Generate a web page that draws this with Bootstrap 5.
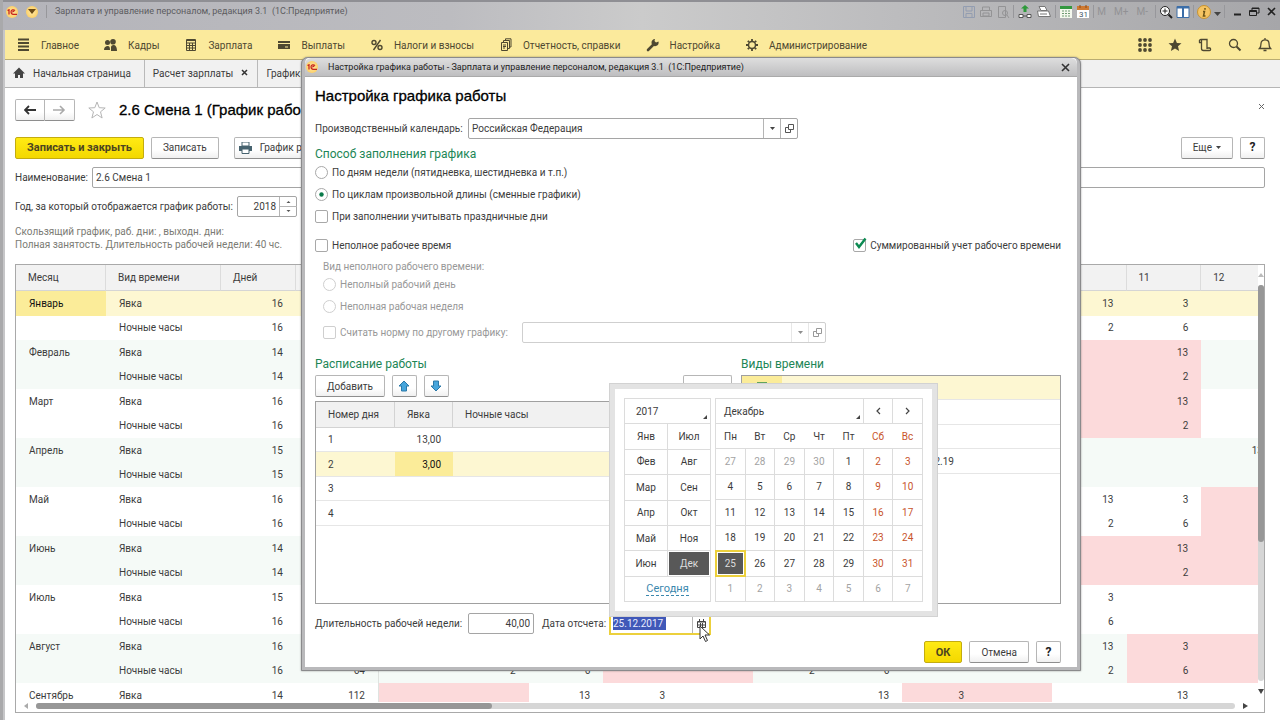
<!DOCTYPE html>
<html lang="ru">
<head>
<meta charset="utf-8">
<meta name="viewport" content="width=device-width, initial-scale=1">
<title>Настройка графика работы</title>
<link href="https://cdn.jsdelivr.net/npm/bootstrap@5.3.0/dist/css/bootstrap.min.css" rel="stylesheet">
<style>
  body { font-family: Roboto, "Liberation Sans", sans-serif; font-size: 10px; line-height: 13px; color: #3c3c3c; background: #fff; }
  button, input { font: inherit; color: inherit; }
  svg { display: block; flex: none; }
  .app-window { height: 100vh; overflow: hidden; border-left: 3px solid #a9a9ab; box-shadow: inset 2px 0 #c6c6c8; }
  .plain { border: 0; background: none; padding: 0; }

  /* title bar */
  .titlebar { height: 30px; padding: 0 4px 8px 3px; border-top: 2px solid #8f8f94; background: linear-gradient(90deg, #b4b4ba, #bcbcc0 35%, #cbcbcb 50%, #bcbcbe 70%, #a6a6a9); color: #5c5c60; }
  .tools { gap: 3px; }
  .win-name { font-size: 9px; white-space: nowrap; }
  .vsep { width: 1px; height: 13px; background: #97979b; }
  .orb { width: 12px; height: 12px; border-radius: 50%; background: radial-gradient(#ffe9a8, #fbc64e); display: flex; align-items: center; justify-content: center; flex: none; }
  .faint { opacity: .35; }

  /* sections */
  .sections { height: 30px; margin-left: 2px; padding: 2px 8px 0 11px; background: #fbea9c; border-bottom: 1px solid #b9ac72; color: #4e4831; }
  .sections a { color: inherit; text-decoration: none; gap: 9px; }
  .sections nav { gap: 24px; }
  .tabs { height: 28px; margin-left: 2px; background: #f1f1f1; border-bottom: 1px solid #b5b5b5; }
  .tabs a { color: #3c3c3c; text-decoration: none; border-right: 1px solid #b9b9b9; padding: 0 8px; }

  .page { padding: 11px 15px 7px 12px; }
  .caption { font: 15px/20px "Liberation Sans", sans-serif; color: #000; -webkit-text-stroke: .3px #000; margin: 0; white-space: nowrap; }
  .cmd { height: 22px; padding: 0 11px; border: 1px solid #b6b6b6; border-bottom-color: #8e8e8e; border-radius: 2px; background: linear-gradient(#fff 60%, #f0f0f0); white-space: nowrap; display: flex; align-items: center; justify-content: center; }
  .cmd-main { background: linear-gradient(#ffea14, #f3d800); border-color: #c3ac10; font-size: 11px; font-weight: 700; color: #4b4420; }
  .cmd-help { width: 25px; padding: 0; font-weight: 700; font-size: 12px; color: #222; }
  .cmds { gap: 7px; }
  .field { height: 21px; border: 1px solid #a5a5a5; border-radius: 2px; background: #fff; display: flex; min-width: 0; }
  .field input { border: 0; outline: 0; background: none; min-width: 0; width: 100%; padding: 0 3px; }
  .field button { flex: none; width: 17px; border: 0; border-left: 1px solid #b5b5b5; background: none; padding: 0; display: flex; align-items: center; justify-content: center; }
  .field.off { border-color: #cfcfcf; }
  .field.off button { border-color: #d8d8d8; opacity: .6; }
  .muted { color: #7b7b74; }

  /* schedule grid */
  .sheet { border: 1px solid #a9a9a9; margin-top: 13px; }
  .sheet-scroll { overflow: hidden; }
  .sheet table { width: calc(100% + 18px); table-layout: fixed; border-collapse: separate; border-spacing: 0; }
  .sheet th { height: 26px; background: #f2f2f2; font-weight: 400; padding: 0 12px; border-right: 1px solid #dcdcdc; border-bottom: 1px solid #d5d5d5; }
  .sheet td { height: 24px; padding: 0 13px; text-align: right; white-space: nowrap; }
  .sheet tr:nth-child(odd) td { height: 25px; }
  .sheet td:nth-child(-n+2) { text-align: left; }
  .sheet td:nth-child(4) { border-right: 1px solid #dfe3e0; }
  .sheet .band td { background: #f5faf7; }
  .sheet .current td { background: #fdf7d2; }
  .sheet .current td:first-child { background: #fbec99; color: #111; }
  .sheet td.rest { background: #fcdadb; }
  .bar-y { width: 14px; }
  .bar-x { padding: 1px 8px 3px; }
  .track { background: #d6d6d6; border-radius: 4px; }
  .thumb { background: #979797; border-radius: 4px; }

  /* dialog */
  .dlg { position: absolute; left: 298px; right: 199px; top: 57px; border: solid #b9b9bb; border-width: 1px 4px 4px; border-radius: 7px 7px 0 0; outline: 1px solid #8a8a8c; outline-offset: -1px; background: #fff; box-shadow: 0 0 2px rgba(0,0,0,.4); }
  .dlg-title { height: 19px; background: linear-gradient(#dedede, #bebec0); border-radius: 6px 6px 0 0; color: #222; padding: 0 3px 0 1px; border-bottom: 1px solid #aaa; }
  .dlg-title .win-name { margin-left: 10px; }
  .dlg-body { padding: 9px 16px 4px 10px; }
  .dlg-body > * { flex: none; }
  .dlg-body label { white-space: nowrap; }
  .dlg-foot { margin-top: 6px; }
  .group { color: #1d8656; font-size: 12px; line-height: 14px; margin: 0; font-weight: 400; }
  .opt { height: 22px; display: flex; align-items: center; gap: 4px; }
  .opt .form-check-input { width: 13px; height: 13px; margin: 0; border-color: #a8a8a8; flex: none; border-radius: 2px; box-shadow: none; }
  .opt .form-check-input[type=radio] { border-radius: 50%; }
  .opt .form-check-input:checked { background-color: #fff; }
  .opt .form-check-input:checked[type=radio] { --bs-form-check-bg-image: url("data:image/svg+xml,%3csvg xmlns='http://www.w3.org/2000/svg' viewBox='-4 -4 8 8'%3e%3ccircle r='1.6' fill='%230a7a4a'/%3e%3c/svg%3e"); }
  .opt .form-check-input:disabled, .opt .form-check-input:disabled ~ label { opacity: 1; }
  .opt .form-check-input:disabled { border-color: #cfcfcf; }
  .off-text { color: #989898; }
  .lists { display: grid; grid-template-columns: 417fr 320fr; column-gap: 9px; margin-top: 14px; }
  .lists > div { margin-top: 4px; }
  .box { border: 1px solid #a0a0a0; }
  .box table { width: 100%; table-layout: fixed; border-collapse: separate; border-spacing: 0; }
  .box th { height: 26px; font-weight: 400; background: #f1f1f1; padding: 0 12px; border-bottom: 1px solid #d3d3d3; border-right: 1px solid #d3d3d3; }
  .box td { height: 24px; padding: 0 12px; border-bottom: 1px solid #e6e6e6; }
  .box tr:nth-child(even) td { height: 25px; }
  .box .picked td { background: #fdf7d2; }
  .box td.cell { background: #fbec99; color: #111; }

  /* calendar */
  .date { width: 102px; border: 2px solid #ecd03c; border-radius: 0; height: 23px; }
  .date .sel { background: #4058b8; color: #e8ecff; flex: none; width: 53px; height: 13px; margin: 3px 0 0 2px; padding: 0; }
  .cal { position: absolute; left: 0; bottom: 18px; width: 329px; border: 6px solid #e3e3e3; outline: 1px solid #d2d2d2; outline-offset: -1px; background: #fff; padding: 9px; display: grid; grid-template-columns: 87px 1fr; column-gap: 4px; z-index: 2; }
  .months { display: grid; grid-template: repeat(8, 1fr) / 1fr 1fr; gap: 1px; background: #dcdcdc; border: 1px solid #dcdcdc; height: 204px; }
  .months > * { border: 0; background: #fff; padding: 0; display: flex; align-items: center; justify-content: center; }
  .months .wide { grid-column: span 2; }
  .pick { position: relative; }
  .months .pick { padding-left: 11px; justify-content: flex-start; }
  .days .pick { padding-left: 8px; text-align: left; }
  .pick::after { content: ""; position: absolute; right: 3px; bottom: 4px; border: 2px solid; border-color: transparent #444 #444 transparent; }
  .months .on { background: #585858; color: #ddd; outline: 1px solid #fff; outline-offset: -1px; }
  .days { width: 100%; height: 204px; table-layout: fixed; border-collapse: collapse; text-align: center; border: 1px solid #dcdcdc; }
  .days td, .days th { height: 25px; padding: 0; font-weight: 400; border: 1px solid #dcdcdc; }
  .days tr.wd th { border-width: 1px 0; }
  .days .plain svg { margin: auto; }
  .days td:nth-child(n+6), .days .wd th:nth-child(n+6) { color: #c8552c; }
  .days td.out { color: #a3a3a3 !important; }
  .days td.on { background: #585858; color: #ddd; outline: 2px solid #ecd03c; outline-offset: -1px; box-shadow: inset 0 0 0 2px #fff; }
  .today { color: #3a87ad; text-decoration: none; border-bottom: 1px dashed #3a87ad; font-size: 11px; }
  .pointer { position: absolute; left: 90px; top: 13px; z-index: 3; }
</style>
</head>
<body>
<div class="app-window d-flex flex-column position-relative">

  <header class="titlebar d-flex align-items-center justify-content-between">
    <div class="d-flex align-items-center gap-2">
      <span class="orb"><svg width="10" height="6" viewBox="0 0 10 6" fill="none" stroke="#c8281e" stroke-width="1.3"><path d="M0.5 1.5L2 .8V5.5M8 1.6C6.5 0 4 1 4 3c0 2 1.500 2.400 2.500 2.400H10M7.300 2.600c-.8-.6-1.800 0-1.600.8"/></svg></span>
      <span class="orb"><svg width="8" height="5"><path d="M0 0h8L4 5z" fill="#6b4a16"/></svg></span>
      <span class="vsep"></span>
      <span class="win-name">Зарплата и управление персоналом, редакция 3.1&nbsp; (1С:Предприятие)</span>
    </div>
    <div class="tools d-flex align-items-center">
      <svg class="faint" width="14" height="14" fill="none" stroke="#4f6da0"><path d="M1.500 1.500h11v11h-11zM4 2v4h6V2M4 12V8.500h6V12"/></svg>
      <svg class="faint" width="14" height="14" fill="none" stroke="#555"><path d="M3.500 5V2h7v3M1.500 5.500h11v6h-11zM4 8h6v3H4z"/></svg>
      <svg class="faint" width="14" height="14" fill="none" stroke="#555"><path d="M2.500 1.500h7v11h-7z"/><circle cx="9" cy="8" r="2.500"/><path d="M11 10l2 3"/></svg>
      <span class="vsep"></span>
      <svg width="16" height="14" fill="none" stroke="#555"><path d="M2 9.500h4v3H2zM10 9.500h4v3h-4zM6 11h4" fill="#fff"/><path d="M8 0l4 3.500H9.500V7h-3V3.500H4z" fill="#2e9a3a" stroke="none"/></svg>
      <svg width="16" height="14" fill="#fff" stroke="#777"><path d="M3 1.500h6l2 4H5zM1.500 6h11l2 5.500h-12zM4 9h7" /></svg>
      <span class="vsep"></span>
      <svg width="14" height="14"><path d="M1 1h12v12H1z" fill="#f4f8ee"/><path d="M1 1h12v3H1z" fill="#34983f"/><path d="M3 6h2M6 6h2M9 6h2M3 8.500h2M6 8.500h2M9 8.500h2M3 11h2M6 11h2M9 11h2" stroke="#6f9a73"/></svg>
      <svg width="14" height="14"><path d="M1 2h12v11H1z" fill="#fff"/><path d="M1 1h12v4H1z" fill="#cf7a32"/><path d="M4 0v3M10 0v3" stroke="#8a4a1a"/><text x="3" y="12" font-size="8" fill="#456">31</text></svg>
      <span class="vsep"></span>
      <span class="faint d-flex gap-2"><span>M</span><span>M+</span><span>M-</span></span>
      <span class="vsep ms-1"></span>
      <svg width="14" height="14" fill="none" stroke="#222"><circle cx="6" cy="6" r="4.500" fill="#fff"/><path d="M3.500 6h5M6 3.500v5"/><path d="M9.500 9.500l3.500 3.500" stroke-width="2"/></svg>
      <svg width="14" height="14"><path d="M1 1.500h12v11H1z" fill="#fff" stroke="#3c6ea8"/><path d="M1 2.500h12M7 2v11" stroke="#3c6ea8" stroke-width="2"/></svg>
      <span class="vsep"></span>
      <svg width="14" height="14"><circle cx="7" cy="7" r="6.500" fill="#f5c462" stroke="#c79332"/><path d="M8 3v1.800M6 6.500h1.500L6.500 11H8.500" stroke="#6b5418" stroke-width="1.500" fill="none"/></svg>
      <svg width="7" height="4" class="mt-1"><path d="M0 0h7L3.500 4z" fill="#444"/></svg>
      <span class="vsep me-1"></span>
      <button class="plain" aria-label="Свернуть"><svg width="10" height="10"><path d="M2 7.500h7" stroke="#222" stroke-width="2"/></svg></button>
      <button class="plain mx-1" aria-label="Восстановить"><svg width="11" height="10" fill="none" stroke="#222"><path d="M3 3V1h7v5H8M3 1.500h7M.5 3.500h7v5h-7zM1 4.500h6"/></svg></button>
      <button class="plain" aria-label="Закрыть"><svg width="9" height="9"><path d="M1 1l7 7M8 1l-7 7" stroke="#222" stroke-width="1.600"/></svg></button>
    </div>
  </header>

  <div class="sections d-flex align-items-center justify-content-between flex-shrink-0">
    <nav class="d-flex align-items-center">
      <a href="#" class="d-flex align-items-center"><svg width="16" height="14"><path d="M2 1.500h11M2 5h11M2 8.500h11M2 12h11" stroke="#4e4831" stroke-width="1.800"/></svg>Главное</a>
      <a href="#" class="d-flex align-items-center"><svg width="16" height="14" fill="#4e4831"><circle cx="10" cy="3.800" r="2.800"/><circle cx="4.500" cy="4.500" r="2.500"/><path d="M1 12c0-3 2-4 3.500-4S7 8.500 7 12zM8 10c-.3-2 1-3 2.500-3S14 8 14 13H8z"/></svg>Кадры</a>
      <a href="#" class="d-flex align-items-center"><svg width="16" height="14" fill="none" stroke="#4e4831"><path d="M3.500 1.500h9v11h-9zM3.500 2.500h9M3.500 5h9M3.500 7.500h9M3.500 10h9M6.500 5v7M9.500 5v7"/></svg>Зарплата</a>
      <a href="#" class="d-flex align-items-center"><svg width="16" height="14" fill="#4e4831"><path d="M2 3h12v2H2zM2 6h12v5H2z"/><path d="M9 9h3" stroke="#fbea9c"/></svg>Выплаты</a>
      <a href="#" class="d-flex align-items-center"><svg width="16" height="14" fill="none" stroke="#4e4831" stroke-width="1.400"><circle cx="5" cy="4.500" r="2"/><circle cx="11" cy="9.500" r="2"/><path d="M11.500 2l-7 10"/></svg>Налоги и взносы</a>
      <a href="#" class="d-flex align-items-center"><svg width="16" height="14" fill="none" stroke="#4e4831"><path d="M3.500 4.500h6v8h-6zM5.500 4V2.500h6v8H10M7.500 2V.8H13V9h-1M5 7h3M5 8.500h3M5 10h2"/></svg>Отчетность, справки</a>
      <a href="#" class="d-flex align-items-center"><svg width="16" height="14"><path d="M3 12l6-6" stroke="#4e4831" stroke-width="2.600" stroke-linecap="round"/><path d="M13.500 3.500A3.600 3.600 0 1 1 10 1L9.500 3l1.500 1.500z" fill="#4e4831"/></svg>Настройка</a>
      <a href="#" class="d-flex align-items-center"><svg width="16" height="14" fill="none" stroke="#4e4831"><circle cx="8" cy="7" r="3.500" stroke-width="1.500"/><path d="M8 1v2M8 11v2M2 7h2M12 7h2M3.800 2.800l1.400 1.400M10.800 9.800l1.400 1.400M3.800 11.200l1.400-1.400M10.800 4.200l1.400-1.400" stroke-width="1.800"/></svg>Администрирование</a>
    </nav>
    <div class="d-flex gap-3">
      <svg width="14" height="14" fill="#4e4831"><g id="r"><circle cx="2" cy="2" r="1.900"/><circle cx="7" cy="2" r="1.900"/><circle cx="12" cy="2" r="1.900"/></g><use href="#r" y="5"/><use href="#r" y="10"/></svg>
      <svg width="14" height="14"><path d="M7 .5l1.900 4.400 4.600.4-3.500 3 1.100 4.700L7 10.500 2.900 13 4 8.300.5 5.300l4.600-.4z" fill="#4e4831"/></svg>
      <svg width="14" height="14" fill="none" stroke="#4e4831" stroke-width="1.300"><path d="M3.500 4.500h-2c-.8-3.500 2-3 2-3h5.500v9.500M3.500 2v8.500c0 1.500 1 2 2 2h6c1.500 0 1.500-2.500 0-2.500M9 10h3"/></svg>
      <svg width="14" height="14" fill="none" stroke="#4e4831"><circle cx="5.500" cy="5.500" r="4" stroke-width="1.300"/><path d="M8.500 8.500l4 4" stroke-width="2"/></svg>
      <svg width="14" height="14" fill="none" stroke="#4e4831" stroke-width="1.300"><path d="M1.500 10.500C3 9 3 7.500 3 5.500 3 3 5 1.800 7 1.800S11 3 11 5.500c0 2 0 3.500 1.500 5zM7 0v2M5.500 12.500h3M1.500 10.500h11"/></svg>
    </div>
  </div>

  <div class="tabs d-flex flex-shrink-0">
    <a href="#" class="d-flex align-items-center gap-2" style="padding-right:13px"><svg width="12" height="12"><path d="M6 .5L0 6.500h2V11h3V8h2v3h3V6.500h2z" fill="#444"/></svg>Начальная страница</a>
    <a href="#" class="d-flex align-items-center">Расчет зарплаты<svg class="ms-2" width="8" height="8"><path d="M1 1l5 5M6 1L1 6" stroke="#333" stroke-width="1.500"/></svg></a>
    <a href="#" class="d-flex align-items-center border-0">Графики</a>
  </div>

  <main class="page d-flex flex-column flex-grow-1" style="min-height:0">
    <div class="d-flex align-items-center">
      <div class="btn-group">
        <button class="cmd px-2 rounded-end-0" aria-label="Назад"><svg width="12" height="10"><path d="M5 1L1 5l4 4M1 5h11" stroke="#333" stroke-width="1.800" fill="none"/></svg></button>
        <button class="cmd px-2 rounded-start-0 border-start-0" aria-label="Вперед"><svg width="13" height="10"><path d="M7 1l4 4-4 4M11 5H0" stroke="#aaa" stroke-width="1.600" fill="none"/></svg></button>
      </div>
      <svg style="margin:0 13px" width="18" height="18" viewBox="0 0 18 18"><path d="M9 1l2.200 5.700 6 .3-4.700 3.800L14.100 17 9 13.500 3.900 17l1.600-6.200L.8 7l6-.3z" fill="#fff" stroke="#b5b5b5"/></svg>
      <h1 class="caption flex-grow-1">2.6 Смена 1 (График рабо</h1>
      <button class="plain align-self-start" aria-label="Закрыть форму"><svg width="7" height="16"><path d="M1 5l5 5M6 5l-5 5" stroke="#666"/></svg></button>
    </div>
    <div class="cmds d-flex align-items-center mt-3">
      <button class="cmd cmd-main">Записать и закрыть</button>
      <button class="cmd">Записать</button>
      <button class="cmd ms-2 px-1 gap-2"><svg width="13" height="12"><path d="M3 0h7v4H3z" fill="#fff" stroke="#47636f"/><path d="M0 4h13v5H0z" fill="#47636f"/><path d="M3 7h7v4.500H3z" fill="#fff" stroke="#47636f"/></svg>График р</button>
      <button class="cmd ms-auto gap-1">Еще <svg width="5" height="3"><path d="M0 0h5L2.500 3z" fill="#444"/></svg></button>
      <button class="cmd cmd-help">?</button>
    </div>
    <div class="d-flex align-items-center mt-2 gap-1">
      <label for="nm" class="text-nowrap">Наименование:</label>
      <div class="field w-100"><input id="nm" value="2.6 Смена 1"></div>
    </div>
    <div class="d-flex align-items-center mt-2 gap-1">
      <label for="yr" class="text-nowrap">Год, за который отображается график работы:</label>
      <div class="field" style="width:60px"><input id="yr" class="text-end" value="2018">
        <button aria-label="Изменить год"><svg width="17" height="19"><path d="M0 9.500h17" stroke="#b5b5b5"/><path d="M8.500 4l2 2h-4zM8.500 15l2-2h-4z" fill="#555"/></svg></button></div>
    </div>
    <p class="muted mt-2 mb-0">Скользящий график, раб. дни: , выходн. дни:<br>Полная занятость. Длительность рабочей недели: 40 чс.</p>
    <div class="sheet d-flex flex-column flex-grow-1" style="min-height:0">
      <div class="d-flex flex-grow-1" style="min-height:0">
        <div class="sheet-scroll flex-grow-1">
          <table>
            <colgroup><col style="width:90px"><col style="width:115px"><col style="width:75px"><col style="width:83px"></colgroup>
            <thead><tr id="head"><th>Месяц</th><th>Вид времени</th><th>Дней</th><th></th></tr></thead>
            <tbody id="rows"></tbody>
          </table>
        </div>
        <div class="bar-y d-flex flex-column align-items-center pt-1">
          <svg width="6" height="4" class="mt-1"><path d="M0 4h6L3 0z" fill="#bbb"/></svg>
          <div class="track flex-grow-1 mt-2" style="width:6px"><div class="thumb" style="height:65%"></div></div>
          <svg width="6" height="5" class="my-2"><path d="M0 0h6L3 5z" fill="#444"/></svg>
        </div>
      </div>
      <div class="bar-x d-flex align-items-center gap-2">
        <svg width="4" height="6"><path d="M4 0v6L0 3z" fill="#aaa"/></svg>
        <div class="track flex-grow-1"><div class="thumb" style="width:38%;height:6px"></div></div>
        <svg width="5" height="6" class="me-2"><path d="M0 0v6l5-3z" fill="#444"/></svg>
      </div>
    </div>
  </main>

  <section class="dlg" role="dialog" aria-label="Настройка графика работы">
    <div class="dlg-title d-flex align-items-center">
      <span class="orb"><svg width="10" height="6" viewBox="0 0 10 6" fill="none" stroke="#c8281e" stroke-width="1.300"><path d="M0.5 1.500L2 .8V5.500M8 1.600C6.500 0 4 1 4 3c0 2 1.500 2.400 2.500 2.400H10M7.300 2.600c-.8-.6-1.800 0-1.600.8"/></svg></span>
      <span class="win-name flex-grow-1">Настройка графика работы - Зарплата и управление персоналом, редакция 3.1&nbsp; (1С:Предприятие)</span>
      <button class="plain me-1" aria-label="Закрыть окно"><svg width="9" height="9"><path d="M1 1l7 7M8 1L1 8" stroke="#333" stroke-width="1.600"/></svg></button>
    </div>
    <div class="dlg-body d-flex flex-column">
      <h2 class="caption">Настройка графика работы</h2>
      <div class="d-flex align-items-center" style="margin-top:12px">
        <label for="pc" style="width:153px">Производственный календарь:</label>
        <div class="field" style="width:330px"><input id="pc" value="Российская Федерация">
          <button aria-label="Выбрать"><svg width="5" height="3"><path d="M0 0h5L2.500 3z" fill="#444"/></svg></button>
          <button aria-label="Открыть"><svg width="9" height="9" fill="none" stroke="#555"><path d="M3.500 .5h5v5h-5zM3 3.500H.5v5h5V6"/></svg></button></div>
      </div>
      <h3 class="group mt-2">Способ заполнения графика</h3>
      <div class="opt"><input class="form-check-input" type="radio" name="fill" id="f1"><label for="f1">По дням недели (пятидневка, шестидневка и т.п.)</label></div>
      <div class="opt"><input class="form-check-input" type="radio" name="fill" id="f2" checked><label for="f2">По циклам произвольной длины (сменные графики)</label></div>
      <div class="opt"><input class="form-check-input" type="checkbox" id="f3"><label for="f3">При заполнении учитывать праздничные дни</label></div>
      <div class="d-flex justify-content-between" style="margin-top:7px">
        <div class="opt"><input class="form-check-input" type="checkbox" id="f4"><label for="f4">Неполное рабочее время</label></div>
        <div class="opt position-relative"><input class="form-check-input" type="checkbox" id="f5" checked style="--bs-form-check-bg-image:none"><label for="f5">Суммированный учет рабочего времени</label>
          <svg class="position-absolute start-0 top-0" style="pointer-events:none" width="15" height="18"><path d="M3 9l3 4L12.500 4.500" fill="none" stroke="#0c8a52" stroke-width="2.400"/></svg></div>
      </div>
      <div class="off-text ps-2">
        <div class="mt-1">Вид неполного рабочего времени:</div>
        <div class="opt"><input class="form-check-input" type="radio" name="part" id="p1" disabled><label for="p1">Неполный рабочий день</label></div>
        <div class="opt"><input class="form-check-input" type="radio" name="part" id="p2" disabled><label for="p2">Неполная рабочая неделя</label></div>
        <div class="d-flex align-items-center mt-1">
          <div class="opt" style="width:199px"><input class="form-check-input" type="checkbox" id="p3" disabled><label for="p3">Считать норму по другому графику:</label></div>
          <div class="field off" style="width:304px"><input aria-label="Другой график" disabled>
            <button aria-label="Выбрать график"><svg width="5" height="3"><path d="M0 0h5L2.500 3z" fill="#444"/></svg></button>
            <button aria-label="Открыть график"><svg width="9" height="9" fill="none" stroke="#555"><path d="M3.500 .5h5v5h-5zM3 3.500H.5v5h5V6"/></svg></button></div>
        </div>
      </div>
      <div class="lists">
        <h3 class="group">Расписание работы</h3>
        <h3 class="group">Виды времени</h3>
        <div>
          <div class="cmds d-flex">
            <button class="cmd">Добавить</button>
            <button class="cmd cmd-help" aria-label="Вверх"><svg width="12" height="12"><path d="M6 1l5 5H8.500v5h-5V6H1z" fill="#46a5dc" stroke="#2b78a8"/></svg></button>
            <button class="cmd cmd-help" aria-label="Вниз"><svg width="12" height="12"><path d="M6 11l5-5H8.500V1h-5v5H1z" fill="#46a5dc" stroke="#2b78a8"/></svg></button>
            <button class="cmd ms-auto" style="width:49px" aria-label="Еще"></button>
          </div>
          <div class="box mt-1" style="height:203px">
            <table>
              <colgroup><col style="width:79px"><col style="width:58px"><col></colgroup>
              <thead><tr><th>Номер дня</th><th>Явка</th><th>Ночные часы</th></tr></thead>
              <tbody>
                <tr><td>1</td><td class="text-end">13,00</td><td></td></tr>
                <tr class="picked"><td>2</td><td class="cell text-end">3,00</td><td></td></tr>
                <tr><td>3</td><td></td><td></td></tr>
                <tr><td>4</td><td></td><td></td></tr>
              </tbody>
            </table>
          </div>
        </div>
        <div class="box">
          <table>
            <colgroup><col style="width:40px"><col></colgroup>
            <tbody>
              <tr class="picked"><td class="cell"><svg width="16" height="18"><path d="M3 4h10M5 9l3 3 5-8" stroke="#2f8a4a" stroke-width="1.500" fill="none"/></svg></td><td></td></tr>
              <tr><td></td><td></td></tr>
              <tr><td></td><td></td></tr>
              <tr><td></td><td class="text-end" style="padding-right:106px">25.12.19</td></tr>
            </tbody>
          </table>
        </div>
      </div>
      <div class="d-flex align-items-center mt-2">
        <label for="wk" style="width:153px">Длительность рабочей недели:</label>
        <div class="field" style="width:66px"><input id="wk" class="text-end" value="40,00"></div>
        <label for="dt" class="ms-2" style="width:67px">Дата отсчета:</label>
        <div class="position-relative">
          <div class="field date"><input id="dt" class="sel" value="25.12.2017">
            <button class="ms-auto" aria-label="Календарь"><svg width="9" height="9"><path d="M.5 2.500h8v6h-8zM2.500 0v2M6.500 0v2M1 3h7M3.500 4v4M5.500 4v4M1 6h7" stroke="#444" fill="none"/></svg></button></div>
          <div class="cal">
            <div class="months">
              <button class="pick wide">2017</button>
              <button>Янв</button><button>Июл</button><button>Фев</button><button>Авг</button><button>Мар</button><button>Сен</button>
              <button>Апр</button><button>Окт</button><button>Май</button><button>Ноя</button><button>Июн</button><button class="on">Дек</button>
              <div class="wide"><a href="#" class="today">Сегодня</a></div>
            </div>
            <table class="days">
              <thead>
                <tr><th colspan="5" class="pick">Декабрь</th><th><button class="plain" aria-label="Предыдущий месяц"><svg width="5" height="8"><path d="M4 1L1 4l3 3" fill="none" stroke="#444" stroke-width="1.200"/></svg></button></th><th><button class="plain" aria-label="Следующий месяц"><svg width="5" height="8"><path d="M1 1l3 3-3 3" fill="none" stroke="#444" stroke-width="1.200"/></svg></button></th></tr>
                <tr class="wd"><th>Пн</th><th>Вт</th><th>Ср</th><th>Чт</th><th>Пт</th><th>Сб</th><th>Вс</th></tr>
              </thead>
              <tbody id="days"></tbody>
            </table>
          </div>
          <svg class="pointer" width="12" height="18"><path d="M1 1v13l3-3 2.500 5.500 2-1L6 10h4.500z" fill="#fff" stroke="#333"/></svg>
        </div>
      </div>
      <div class="cmds dlg-foot d-flex justify-content-end">
        <button class="cmd cmd-main">ОК</button>
        <button class="cmd">Отмена</button>
        <button class="cmd cmd-help">?</button>
      </div>
    </div>
  </section>
</div>

<script>
  // Hours per day of month: [first row, second row]; "rest" lists non-working days.
  const months = [
    { name: "Январь", days: [16, 16], hours: {10: [13, 2], 11: [3, 6]}, rest: [] },
    { name: "Февраль", days: [14, 14], hours: {11: [13, 2]}, rest: [10, 11] },
    { name: "Март", days: [16, 16], hours: {11: [13, 2]}, rest: [10, 11] },
    { name: "Апрель", days: [15, 15], hours: {12: [13, ""]}, rest: [] },
    { name: "Май", days: [16, 16], hours: {10: [13, 2], 11: [3, 6]}, rest: [12] },
    { name: "Июнь", days: [14, 14], hours: {11: [13, 2]}, rest: [10, 11, 12] },
    { name: "Июль", days: [15, 16], hours: {10: [3, 6]}, rest: [] },
    { name: "Август", days: [16, 16], total: ["", 64], hours: {2: ["", 2], 3: ["", 6], 6: ["", 2], 7: ["", 6], 10: [13, 2], 11: [3, 6]}, rest: [4, 5, 11, 12] },
    { name: "Сентябрь", days: [14], total: [112], hours: {3: [13], 4: [3], 7: [13], 8: [3], 11: [13]}, rest: [1, 2, 8, 9] }
  ];
  const head = document.getElementById("head");
  for (let d = 1; d <= 12; d++) head.insertAdjacentHTML("beforeend", `<th>${d > 10 ? d : ""}</th>`);
  let html = "";
  months.forEach((m, i) => m.days.forEach((n, k) => {
    const cls = i === 0 && k === 0 ? "current" : i % 2 ? "band" : "";
    html += `<tr class="${cls}"><td>${k ? "" : m.name}</td><td>${k ? "Ночные часы" : "Явка"}</td><td>${n}</td><td>${m.total ? m.total[k] : ""}</td>`;
    for (let d = 1; d <= 12; d++) html += `<td class="${m.rest.includes(d) ? "rest" : ""}">${m.hours[d] ? m.hours[d][k] : ""}</td>`;
    html += "</tr>";
  }));
  document.getElementById("rows").innerHTML = html;

  let cal = "";
  for (let w = 0; w < 6; w++) {
    cal += "<tr>";
    for (let c = 0; c < 7; c++) {
      const n = w * 7 + c - 3, out = n < 1 || n > 31;
      cal += `<td class="${out ? "out" : n === 25 ? "on" : ""}">${n < 1 ? n + 30 : n > 31 ? n - 31 : n}</td>`;
    }
    cal += "</tr>";
  }
  document.getElementById("days").innerHTML = cal;
</script>
<script src="https://cdn.jsdelivr.net/npm/bootstrap@5.3.0/dist/js/bootstrap.bundle.min.js"></script>
</body>
</html>
